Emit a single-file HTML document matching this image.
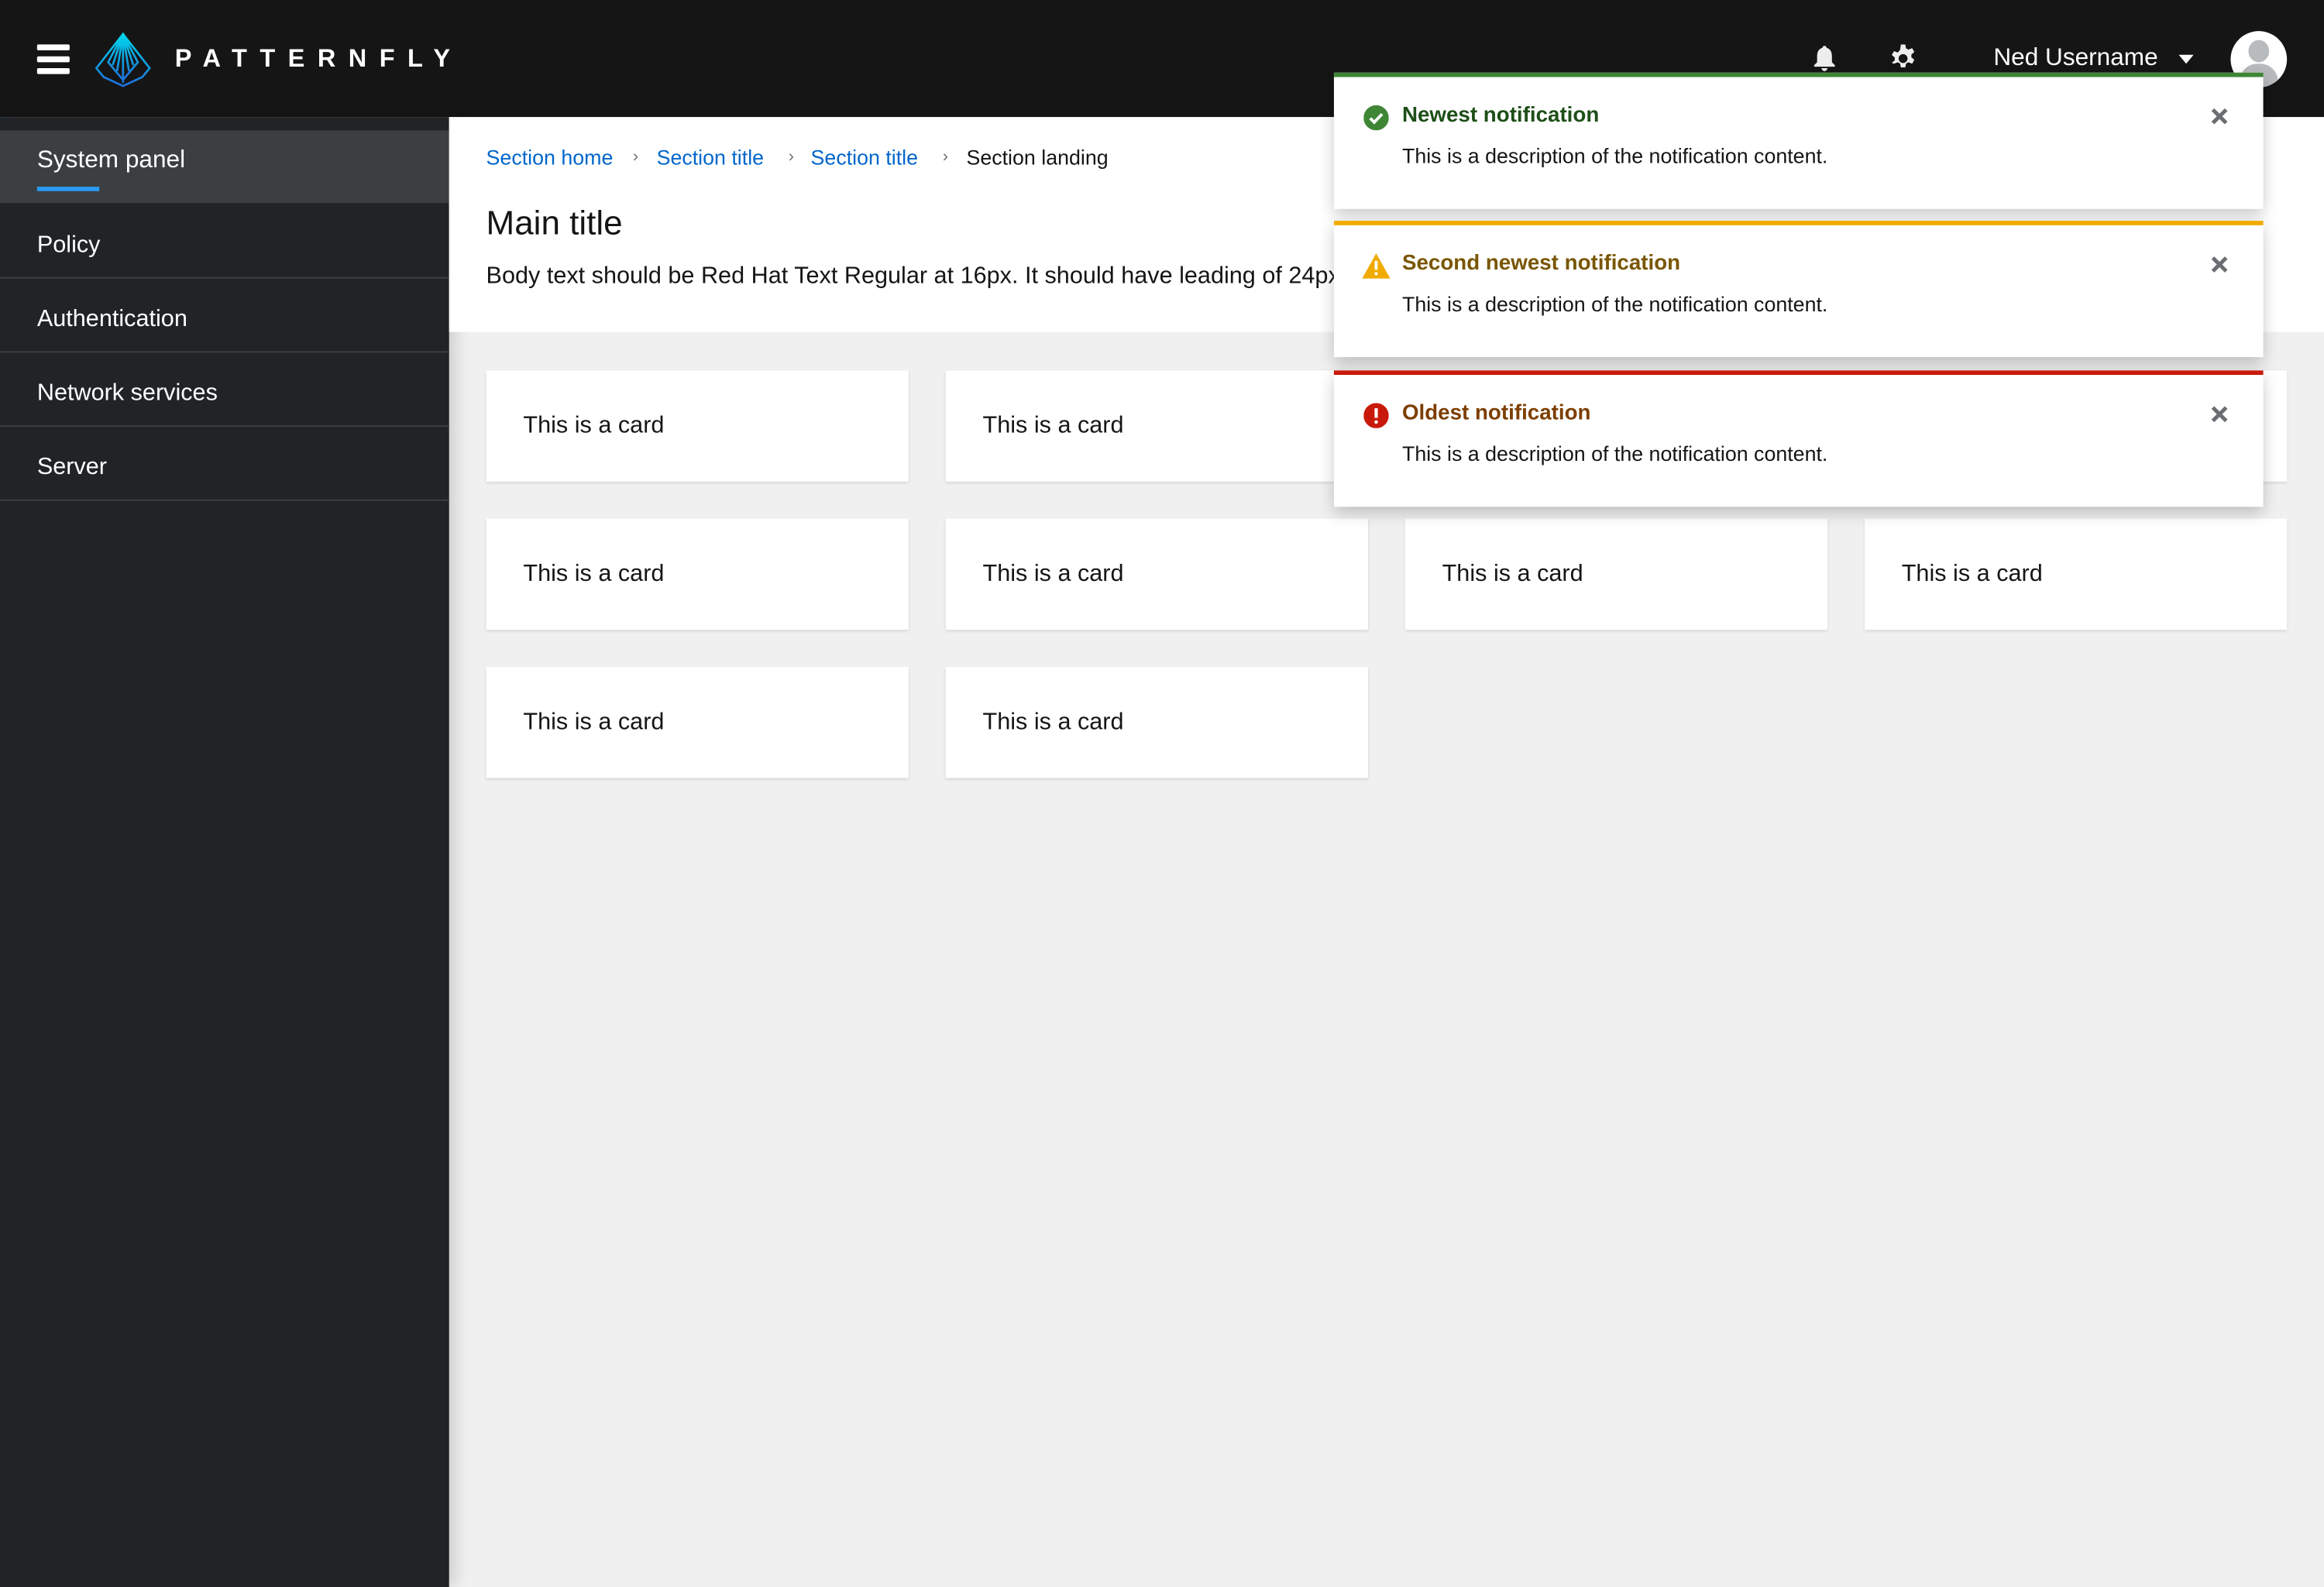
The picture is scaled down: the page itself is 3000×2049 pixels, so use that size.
<!DOCTYPE html>
<html><head><meta charset="utf-8"><style>
html,body{margin:0;padding:0;width:3000px;height:2048px;overflow:hidden;background:#f0f0f0}
#w{position:absolute;left:0;top:0;width:1568px;height:1071px;transform:scale(1.91327);transform-origin:0 0;font-family:"Liberation Sans",sans-serif;background:#f0f0f0;overflow:hidden}
.a{position:absolute}
.hdr{left:0;top:0;width:1568px;height:79px;background:#151515}
.side{left:0;top:79px;width:303px;height:992px;background:#212427;box-shadow:4px 0 10px rgba(0,0,0,.15)}
.nav{position:absolute;left:0;width:303px;height:50px;border-bottom:1px solid #3c3f42;color:#fff;font-size:16px;line-height:50px;padding-left:25px;padding-top:3px;box-sizing:border-box}
.white{left:303px;top:79px;width:1265px;height:145px;background:#fff}
.card{position:absolute;width:285px;height:75px;background:#fff;box-shadow:0 1px 2px rgba(0,0,0,.12);font-size:16px;color:#151515;line-height:75px;padding-left:25px;box-sizing:border-box}
.toast{position:absolute;left:900px;width:627px;height:92px;background:#fff;box-shadow:0 4px 10px rgba(0,0,0,.22);box-sizing:border-box}
.toast .t{position:absolute;left:46px;top:18px;font-size:14.5px;font-weight:bold}
.toast .d{position:absolute;left:46px;top:45px;font-size:14px;color:#151515}
.toast .x{position:absolute;left:591px;top:20px}
.toast .i{position:absolute;left:20px;top:19px}
.bc{font-size:14px;top:98px}
</style></head><body><div id="w">
<div class="a hdr"></div>
<div class="a" style="left:25px;top:30px;width:22px;height:4px;background:#fff;border-radius:1px"></div>
<div class="a" style="left:25px;top:38px;width:22px;height:4px;background:#fff;border-radius:1px"></div>
<div class="a" style="left:25px;top:46px;width:22px;height:4px;background:#fff;border-radius:1px"></div>
<svg class="a" style="left:63px;top:22px" width="40" height="38" viewBox="0 0 40 38"><defs><linearGradient id="g" x1="0" y1="0" x2="0" y2="1"><stop offset="0" stop-color="#00d6ea"/><stop offset="1" stop-color="#1e6ed8"/></linearGradient></defs><g fill="none" stroke="url(#g)" stroke-width="1.4"><path d="M20 1 L38 24 L33 30 L20 36 L7 30 L2 24 Z"/><path d="M20 1 L10 20 L20 32 L30 20 Z"/><path d="M20 1 L16 26 M20 1 L24 26 M20 1 L20 34 M20 1 L13 22 M20 1 L27 22"/></g></svg>
<div class="a" style="left:118px;top:30px;color:#fff;font-size:17px;font-weight:bold;letter-spacing:8.6px">PATTERNFLY</div>
<svg class="a" style="left:1223px;top:30px" width="16" height="19" viewBox="0 0 16 19"><path d="M8 1c-1 0-1.3.6-1.3 1.2C4 3 3 5 3 8v4l-2 2v1h14v-1l-2-2V8c0-3-1-5-3.7-5.8C9.3 1.6 9 1 8 1z M6 16h4c0 1-1 2-2 2s-2-1-2-2z" fill="#ededed"/></svg>
<svg class="a" style="left:1275px;top:30px" width="18" height="18" viewBox="0 0 18 18"><path fill="#ededed" d="M7.5 0h3l.5 2.6 1.6.9 2.5-1 1.5 2.6-2 1.7v1.9l2 1.7-1.5 2.6-2.5-1-1.6.9-.5 2.6h-3l-.5-2.6-1.6-.9-2.5 1L1.4 12.4l2-1.7V8.8l-2-1.7L2.9 4.5l2.5 1L7 3.6z"/><circle cx="9" cy="9.5" r="3" fill="#151515"/></svg>
<div class="a" style="left:1345px;top:30px;color:#fff;font-size:16.5px">Ned Username</div>
<div class="a" style="left:1470px;top:37px;width:0;height:0;border-left:5px solid transparent;border-right:5px solid transparent;border-top:6px solid #fff"></div>
<div class="a" style="left:1505px;top:21px;width:38px;height:38px;border-radius:50%;background:#fff;overflow:hidden"><div class="a" style="left:12px;top:6px;width:14px;height:15px;border-radius:50%;background:#b8bbbe"></div><div class="a" style="left:6px;top:22px;width:26px;height:20px;border-radius:12px 12px 0 0;background:#b8bbbe"></div></div>

<div class="a side">
<div class="nav" style="top:9px;height:49px;background:#3c3f42;border:none;line-height:40px;padding-top:0;font-size:16.5px">System panel<div class="a" style="left:25px;top:38px;width:42px;height:3px;background:#2b9af3"></div></div>
<div class="nav" style="top:59px">Policy</div>
<div class="nav" style="top:109px">Authentication</div>
<div class="nav" style="top:159px">Network services</div>
<div class="nav" style="top:209px">Server</div>
</div>

<div class="a white"></div>
<div class="a bc" style="left:328px;color:#0066cc">Section home</div>
<div class="a bc" style="left:427px;color:#6a6e73;font-size:11px;top:100px">&#x203A;</div>
<div class="a bc" style="left:443px;color:#0066cc">Section title</div>
<div class="a bc" style="left:532px;color:#6a6e73;font-size:11px;top:100px">&#x203A;</div>
<div class="a bc" style="left:547px;color:#0066cc">Section title</div>
<div class="a bc" style="left:636px;color:#6a6e73;font-size:11px;top:100px">&#x203A;</div>
<div class="a bc" style="left:652px;color:#151515">Section landing</div>
<div class="a" style="left:328px;top:137px;font-size:23px;color:#151515">Main title</div>
<div class="a" style="left:328px;top:178px;font-size:16px;color:#151515;white-space:nowrap;width:572px;overflow:hidden">Body text should be Red Hat Text Regular at 16px. It should have leading of 24px</div>

<div class="card" style="left:328px;top:250px">This is a card</div>
<div class="card" style="left:638px;top:250px">This is a card</div>
<div class="card" style="left:948px;top:250px">This is a card</div>
<div class="card" style="left:1258px;top:250px">This is a card</div>
<div class="card" style="left:328px;top:350px">This is a card</div>
<div class="card" style="left:638px;top:350px">This is a card</div>
<div class="card" style="left:948px;top:350px">This is a card</div>
<div class="card" style="left:1258px;top:350px">This is a card</div>
<div class="card" style="left:328px;top:450px">This is a card</div>
<div class="card" style="left:638px;top:450px">This is a card</div>

<div class="toast" style="top:49px;border-top:3px solid #3e8635">
<svg class="i" width="17" height="17" viewBox="0 0 17 17"><circle cx="8.5" cy="8.5" r="8.5" fill="#3e8635"/><path d="M4.5 8.8l2.7 2.7 5.3-5.5" stroke="#fff" stroke-width="2" fill="none"/></svg>
<div class="t" style="color:#1e4f18">Newest notification</div>
<div class="d">This is a description of the notification content.</div>
<svg class="x" width="13" height="13" viewBox="0 0 13 13"><path d="M2 2l9 9M11 2l-9 9" stroke="#6a6e73" stroke-width="2.6"/></svg>
</div>
<div class="toast" style="top:149px;border-top:3px solid #f0ab00">
<svg class="i" width="19" height="17" viewBox="0 0 19 17" style="left:19px"><path d="M9.5 0L19 17H0z" fill="#f0ab00"/><path d="M9.5 5v6" stroke="#fff" stroke-width="2"/><circle cx="9.5" cy="13.7" r="1.1" fill="#fff"/></svg>
<div class="t" style="color:#795600">Second newest notification</div>
<div class="d">This is a description of the notification content.</div>
<svg class="x" width="13" height="13" viewBox="0 0 13 13"><path d="M2 2l9 9M11 2l-9 9" stroke="#6a6e73" stroke-width="2.6"/></svg>
</div>
<div class="toast" style="top:250px;border-top:3px solid #c9190b">
<svg class="i" width="17" height="17" viewBox="0 0 17 17"><circle cx="8.5" cy="8.5" r="8.5" fill="#c9190b"/><path d="M8.5 3.5v6.5" stroke="#fff" stroke-width="2.2"/><circle cx="8.5" cy="12.8" r="1.2" fill="#fff"/></svg>
<div class="t" style="color:#7d3e00">Oldest notification</div>
<div class="d">This is a description of the notification content.</div>
<svg class="x" width="13" height="13" viewBox="0 0 13 13"><path d="M2 2l9 9M11 2l-9 9" stroke="#6a6e73" stroke-width="2.6"/></svg>
</div>
</div></body></html>
